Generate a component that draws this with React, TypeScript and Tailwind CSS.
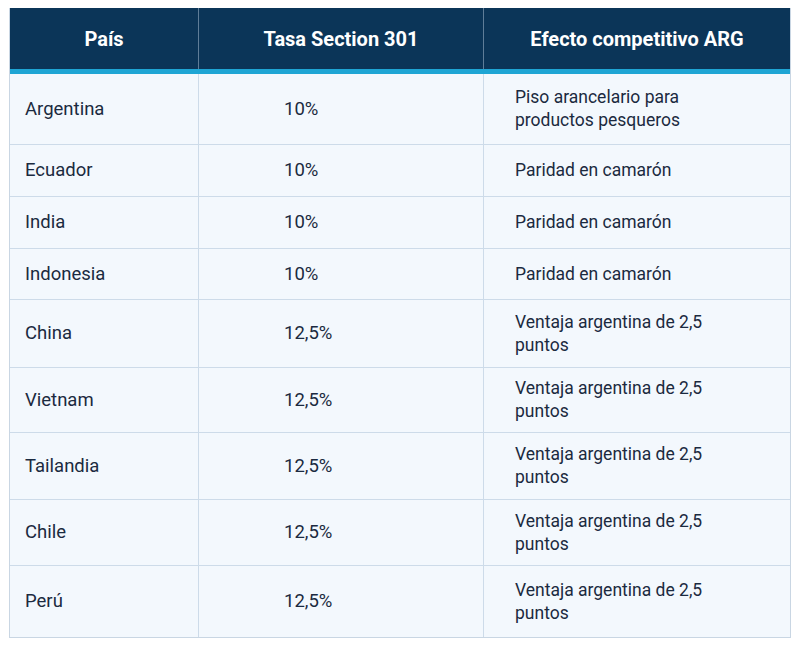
import React from 'react';

type Row = { pais: string; tasa: string; efecto: string; h: string };

const rows: Row[] = [
  { pais: 'Argentina', tasa: '10%', efecto: 'Piso arancelario para productos pesqueros', h: 'h-[71px]' },
  { pais: 'Ecuador', tasa: '10%', efecto: 'Paridad en camarón', h: 'h-[52px]' },
  { pais: 'India', tasa: '10%', efecto: 'Paridad en camarón', h: 'h-[52px]' },
  { pais: 'Indonesia', tasa: '10%', efecto: 'Paridad en camarón', h: 'h-[51px]' },
  { pais: 'China', tasa: '12,5%', efecto: 'Ventaja argentina de 2,5 puntos', h: 'h-[68px]' },
  { pais: 'Vietnam', tasa: '12,5%', efecto: 'Ventaja argentina de 2,5 puntos', h: 'h-[65px]' },
  { pais: 'Tailandia', tasa: '12,5%', efecto: 'Ventaja argentina de 2,5 puntos', h: 'h-[67px]' },
  { pais: 'Chile', tasa: '12,5%', efecto: 'Ventaja argentina de 2,5 puntos', h: 'h-[66px]' },
  { pais: 'Perú', tasa: '12,5%', efecto: 'Ventaja argentina de 2,5 puntos', h: 'h-[71px]' },
];

const App = () => {
  return (
    <div className="w-[800px] h-[650px] bg-white pt-[8px] pl-[9px] font-['Roboto',sans-serif]">
      <div className="w-[782px] border border-[#c9d6e3] border-t-0 bg-[#f3f8fd]">
        {/* header */}
        <div className="grid grid-cols-[189px_285px_1fr] h-[66px] bg-[#0b3558] border-b-[5px] border-[#1ea5d4] text-white font-bold text-[20px]">
          <div className="flex items-center justify-center border-r border-[#5f7d98]">País</div>
          <div className="flex items-center justify-center border-r border-[#5f7d98]">Tasa Section 301</div>
          <div className="flex items-center justify-center">Efecto competitivo ARG</div>
        </div>
        {rows.map((r, i) => (
          <div
            key={r.pais}
            className={`grid grid-cols-[189px_285px_1fr] ${r.h} leading-[23px] text-[#1b2a40] ${
              i < rows.length - 1 ? 'border-b border-[#cddbe9]' : ''
            }`}
          >
            <div className="flex items-center pl-[15px] text-[18.5px] border-r border-[#cddbe9]">{r.pais}</div>
            <div className="flex items-center pl-[85px] text-[18.5px] border-r border-[#cddbe9]">{r.tasa}</div>
            <div className="flex items-center pl-[31px] pr-[70px] text-[17.5px]">{r.efecto}</div>
          </div>
        ))}
      </div>
    </div>
  );
};

export default App;
